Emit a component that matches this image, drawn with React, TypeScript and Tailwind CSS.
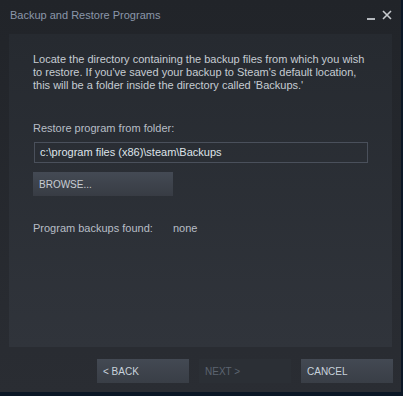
import React from "react";

export default function App() {
  return (
    <div
      className="w-[403px] h-[396px] bg-[#0b1726] relative overflow-hidden"
      style={{ fontFamily: '"Liberation Sans", Arial, sans-serif' }}
    >
      <div className="w-[401px] h-[392px] flex flex-col bg-[linear-gradient(to_bottom,#212429,#2a2d33)]">
        {/* title bar */}
        <div className="h-[30px] flex items-start pl-[10px] pr-[9px] pt-[8px]">
          <div className="text-[11px] leading-[14px] text-[#8b97aa] flex-1">Backup and Restore Programs</div>
          <div className="flex items-end gap-[7px] pt-[1px] h-[11px] box-content">
            <div className="w-[8px] h-[2px] bg-[#b5b9be]" />
            <svg width="10" height="10" viewBox="0 0 10 10">
              <path d="M1 1 L9 9 M9 1 L1 9" stroke="#c8cbcf" strokeWidth="1.6" />
            </svg>
          </div>
        </div>
        {/* content panel */}
        <div className="mx-[9px] mt-[4px] h-[313px] bg-[linear-gradient(to_bottom,#262a30,#30343b)] pl-[24px] pt-[19px]">
          <p className="text-[11px] leading-[13px] text-[#c6ccd3] w-[340px]">
            Locate the directory containing the backup files from which you wish to restore. If you've saved your backup to Steam's default location, this will be a folder inside the directory called 'Backups.'
          </p>
          <div className="mt-[29px] text-[11px] leading-[14px] text-[#b8bec6]">Restore program from folder:</div>
          <div className="mt-[7px] w-[334px] h-[21px] border border-[#4a505b] flex items-center pl-[5px] text-[11px] text-[#dfe4ea] ml-[1px]">
            c:\program files (x86)\steam\Backups
          </div>
          <div className="mt-[9px] w-[140px] h-[24px] bg-[linear-gradient(to_bottom,#444a54,#383c44)] flex items-center pl-[6px] text-[10px] text-[#c8cdd3]">
            BROWSE...
          </div>
          <div className="mt-[25px] flex text-[11px] leading-[14px] text-[#b8bec6]">
            <span className="w-[140px]">Program backups found:</span>
            <span>none</span>
          </div>
        </div>
        {/* buttons */}
        <div className="flex justify-end gap-[10px] pr-[8px] mt-[12px]">
          <div className="w-[92px] h-[24px] bg-[linear-gradient(to_bottom,#434953,#393e46)] flex items-center pl-[6px] text-[10px] text-[#c8d2dc]">
            &lt; BACK
          </div>
          <div className="w-[92px] h-[24px] bg-[#2b2f35] flex items-center pl-[6px] text-[10px] text-[#5c6470]">
            NEXT &gt;
          </div>
          <div className="w-[92px] h-[24px] bg-[linear-gradient(to_bottom,#434953,#393e46)] flex items-center pl-[6px] text-[10px] text-[#c8d2dc]">
            CANCEL
          </div>
        </div>
      </div>
    </div>
  );
}
